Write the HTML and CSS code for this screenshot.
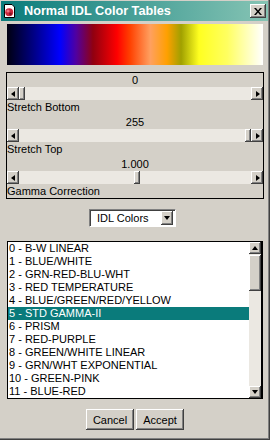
FILE: index.html
```html
<!DOCTYPE html>
<html lang="en">
<head>
    <meta charset="UTF-8">
    <title>Normal IDL Color Tables</title>
    <link rel="stylesheet" href="styles.css">
</head>
<body>
    <div class="window">
        <!-- title bar -->
        <div class="titlebar">
            <span class="app-icon">
                <svg width="11" height="14" viewBox="0 0 11 14">
                    <path d="M0.5 0.5 H8 L10.5 3 V13.5 H0.5 Z" fill="#fff" stroke="#000"/>
                    <circle cx="5.2" cy="8.2" r="4" fill="#c8283c"/>
                    <circle cx="4" cy="7" r="1.6" fill="#f07080"/>
                    <circle cx="6.5" cy="10" r="1.4" fill="#801020"/>
                </svg>
            </span>
            <span class="title">Normal IDL Color Tables</span>
            <span class="close">
                <svg width="8" height="7" viewBox="0 0 8 7">
                    <path d="M0 0 L2 0 L4 2.5 L6 0 L8 0 L5 3.5 L8 7 L6 7 L4 4.5 L2 7 L0 7 L3 3.5 Z" fill="#000"/>
                </svg>
            </span>
        </div>

        <div class="content">
            <div class="colorbar"></div>

            <!-- stretch / gamma sliders -->
            <div class="frame">
                <div class="group">
                    <div class="value">0</div>
                    <div class="hscroll">
                        <span class="sbtn"><i class="tri tri-left"></i></span>
                        <div class="track"><span class="thumb" style="left:0px"></span></div>
                        <span class="sbtn"><i class="tri tri-right"></i></span>
                    </div>
                    <div class="caption">Stretch Bottom</div>
                </div>
                <div class="group">
                    <div class="value">255</div>
                    <div class="hscroll">
                        <span class="sbtn"><i class="tri tri-left"></i></span>
                        <div class="track"><span class="thumb" style="left:calc(100% - 6px)"></span></div>
                        <span class="sbtn"><i class="tri tri-right"></i></span>
                    </div>
                    <div class="caption">Stretch Top</div>
                </div>
                <div class="group">
                    <div class="value">1.000</div>
                    <div class="hscroll">
                        <span class="sbtn"><i class="tri tri-left"></i></span>
                        <div class="track"><span class="thumb" style="left:calc((100% - 6px) * 0.507)"></span></div>
                        <span class="sbtn"><i class="tri tri-right"></i></span>
                    </div>
                    <div class="caption">Gamma Correction</div>
                </div>
            </div>

            <div class="droprow">
                <div class="dropdown">
                    <span class="drop-text">IDL Colors</span>
                    <span class="sbtn drop-btn"><i class="tri tri-down"></i></span>
                </div>
            </div>

            <!-- colour table list -->
            <div class="listbox">
                <ul class="items">
                    <li>0 - B-W LINEAR</li>
                    <li>1 - BLUE/WHITE</li>
                    <li>2 - GRN-RED-BLU-WHT</li>
                    <li>3 - RED TEMPERATURE</li>
                    <li>4 - BLUE/GREEN/RED/YELLOW</li>
                    <li class="selected">5 - STD GAMMA-II</li>
                    <li>6 - PRISM</li>
                    <li>7 - RED-PURPLE</li>
                    <li>8 - GREEN/WHITE LINEAR</li>
                    <li>9 - GRN/WHT EXPONENTIAL</li>
                    <li>10 - GREEN-PINK</li>
                    <li>11 - BLUE-RED</li>
                </ul>
                <div class="vscroll">
                    <span class="sbtn vbtn"><i class="tri tri-up"></i></span>
                    <div class="vtrack"><span class="vthumb"></span></div>
                    <span class="sbtn vbtn"><i class="tri tri-down"></i></span>
                </div>
            </div>

            <div class="buttons">
                <button class="push">Cancel</button>
                <button class="push">Accept</button>
            </div>
        </div>
    </div>
</body>
</html>
```

FILE: styles.css
```css
*{
    margin:0;
    padding:0;
    box-sizing:border-box;
}

body{
    background-color:#d4d0c8;
    font-family:'Liberation Sans',Arial,sans-serif;
    font-size:11px;
    color:#000;
}

.window{
    width:270px;
    height:440px;
    padding:1px 2px 2px 1px;
    background-color:#d4d0c8;
    box-shadow: inset -1px -1px #404040, inset -2px -2px #808080;
}

/* title bar */
.titlebar{
    height:20px;
    display:flex;
    align-items:center;
    padding:0 2px 0 3px;
    background:linear-gradient(to right,#0a7b7b,#86c4b4);
}
.app-icon{
    width:11px;
    height:14px;
    display:flex;
}
.title{
    margin-left:9px;
    flex:1;
    color:#fff;
    font-weight:bold;
    font-size:12.7px;
    white-space:nowrap;
}
.close{
    width:16px;
    height:14px;
    display:flex;
    align-items:center;
    justify-content:center;
    background-color:#d4d0c8;
    box-shadow: inset -1px -1px #404040, inset 1px 1px #fff, inset -2px -2px #808080;
}

.content{
    padding:0 4px 0 5px;
}

.colorbar{
    height:41px;
    margin:3px 1px 0 1px;
    background:linear-gradient(to right,
        #000010 0%,
        #000080 10%,
        #0000ff 20.7%,
        #5000a0 27%,
        #900010 33.6%,
        #ff0000 43%,
        #ff4000 48%,
        #ffa060 56%,
        #ffa000 62.5%,
        #a0a000 68%,
        #ffff20 75%,
        #ffff60 86%,
        #ffffff 100%);
}

/* slider frame */
.frame{
    margin-top:7px;
    border:1px solid #000;
}
.group{
    margin-bottom:1px;
}
.group:last-child{
    margin-bottom:0;
}
.value{
    height:14px;
    line-height:14px;
    text-align:center;
}
.caption{
    height:14px;
    line-height:14px;
}
.hscroll{
    display:flex;
    height:13px;
}
.track{
    flex:1;
    position:relative;
    background-color:#ebe8e2;
}
.thumb{
    position:absolute;
    top:0;
    width:6px;
    height:13px;
    background-color:#d4d0c8;
    box-shadow: inset -1px -1px #404040, inset 1px 1px #fff, inset -2px -2px #808080;
}

/* raised 3d button used by all scroll arrows */
.sbtn{
    width:12px;
    height:13px;
    display:flex;
    align-items:center;
    justify-content:center;
    background-color:#d4d0c8;
    box-shadow: inset -1px -1px #404040, inset 1px 1px #fff, inset -2px -2px #808080;
}
.tri{
    width:0;
    height:0;
    border:0 solid transparent;
}
.tri-left{
    border-width:3.5px 4px 3.5px 0;
    border-right-color:#000;
    margin-right:1px;
}
.tri-right{
    border-width:3.5px 0 3.5px 4px;
    border-left-color:#000;
    margin-left:1px;
}
.tri-up{
    border-width:0 3.5px 4px 3.5px;
    border-bottom-color:#000;
    margin-bottom:1px;
}
.tri-down{
    border-width:4px 3.5px 0 3.5px;
    border-top-color:#000;
}

/* droplist */
.droprow{
    margin-top:10px;
    padding-left:83px;
}
.dropdown{
    width:87px;
    height:18px;
    display:flex;
    align-items:center;
    padding:2px;
    background-color:#fff;
    border:1px solid;
    border-color:#808080 #fff #fff #808080;
    box-shadow: inset 1px 1px #404040;
}
.drop-text{
    flex:1;
    padding-left:5px;
}
.drop-btn{
    width:12px;
    height:14px;
}

/* list */
.listbox{
    margin:14px 1px 0 1px;
    height:158px;
    display:flex;
    background-color:#fff;
    border:1px solid #000;
}
.items{
    flex:1;
    list-style:none;
}
.items li{
    height:13px;
    line-height:13px;
    padding-left:1px;
    white-space:nowrap;
}
.items li.selected{
    background-color:#0a7b7b;
    color:#fff;
}
.vscroll{
    width:13px;
    display:flex;
    flex-direction:column;
    border-right:1px solid #000;
}
.vbtn{
    width:12px;
    height:12px;
}
.vtrack{
    flex:1;
    background-color:#ebe8e2;
}
.vthumb{
    display:block;
    width:12px;
    height:36px;
    margin-top:1px;
    background-color:#d4d0c8;
    box-shadow: inset -1px -1px #404040, inset 1px 1px #fff, inset -2px -2px #808080;
}

.buttons{
    margin-top:10px;
    display:flex;
    justify-content:center;
    gap:2px;
}
.push{
    height:21px;
    padding:0 6px;
    min-width:48px;
    font-family:'Liberation Sans',Arial,sans-serif;
    font-size:11px;
    font-weight:normal;
    color:#000;
    background-color:#d4d0c8;
    border:none;
    box-shadow: inset -1px -1px #404040, inset 1px 1px #fff, inset -2px -2px #808080;
}
```
